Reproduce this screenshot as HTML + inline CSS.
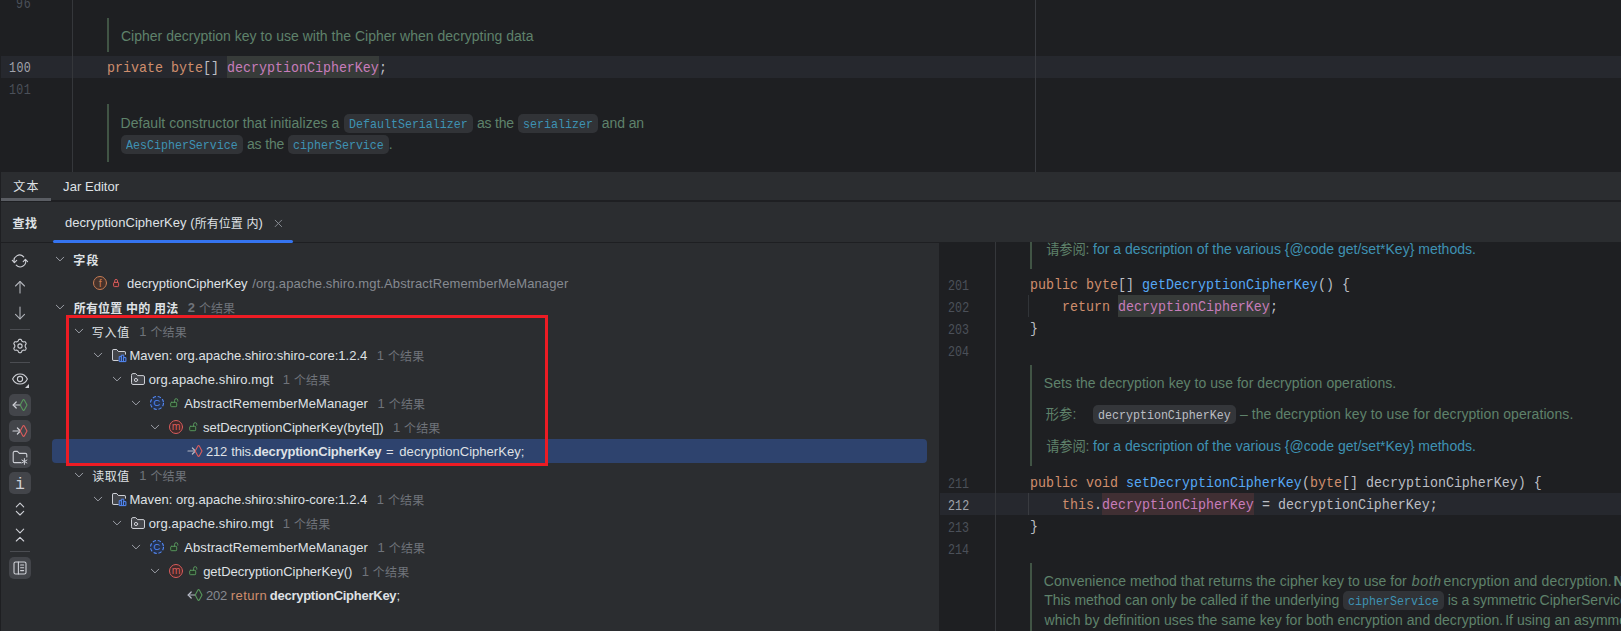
<!DOCTYPE html>
<html lang="zh-CN">
<head>
<meta charset="utf-8">
<title>decryptionCipherKey - Find Usages</title>
<style>
html,body{margin:0;padding:0;background:#1E1F22;}
body{width:1621px;height:631px;overflow:hidden;position:relative;font-family:"Liberation Sans","Noto Sans CJK SC",sans-serif;}
.a{position:absolute;}
.r{position:absolute;white-space:pre;}
.u{font:400 13px/20px "Liberation Sans","Noto Sans CJK SC",sans-serif}
.ub{font:700 13px/20px "Liberation Sans","Noto Sans CJK SC",sans-serif}
.d{font:400 14px/20px "Liberation Sans","Noto Sans CJK SC",sans-serif}
.di{font:italic 400 14px/20px "Liberation Sans","Noto Sans CJK SC",sans-serif}
.db{font:700 14px/20px "Liberation Sans","Noto Sans CJK SC",sans-serif}
.m{font:400 14.8px/20px "Liberation Mono","Noto Sans CJK SC",monospace;transform:scaleX(0.9);transform-origin:0 0}
.s{font:400 12.95px/20px "Liberation Mono","Noto Sans CJK SC",monospace;transform:scaleX(0.9);transform-origin:0 0}
.n{font:400 14.4px/20px "Liberation Mono","Noto Sans CJK SC",monospace;transform:scaleX(0.81);transform-origin:0 0}
.cu{font-size:12px;position:relative;top:0.7px}
.cd{font-size:13.33px}

.cb{position:absolute;background:#313337;border-radius:5px;}
.ic{position:absolute;overflow:visible;}
.tb{position:absolute;left:9px;width:22px;height:22px;border-radius:5px;background:#43454A;}
</style>
</head>
<body>
<!-- ================= top editor ================= -->
<div class="a" id="editor-top" style="left:0;top:0;width:1621px;height:172px;background:#1E1F22;overflow:hidden">
  <div class="a" style="left:1px;top:56px;width:1620px;height:22px;background:#26282E"></div>
  <div class="a" style="left:72px;top:0;width:1px;height:172px;background:#35373B"></div>
  <div class="a" style="left:1035px;top:0;width:1px;height:172px;background:#393B40"></div>
  <div class="a" style="left:107px;top:18px;width:2px;height:34px;background:#415445"></div>
  <div class="a" style="left:107px;top:104px;width:2px;height:58px;background:#415445"></div>
  <div class="a" style="left:227px;top:56px;width:152px;height:22px;background:#373B39"></div>
  <div class="cb" style="left:343.8px;top:114px;width:129px;height:19px"></div>
  <div class="cb" style="left:518.4px;top:114px;width:80px;height:19px"></div>
  <div class="cb" style="left:121.2px;top:135px;width:122px;height:19px"></div>
  <div class="cb" style="left:288.2px;top:135px;width:101px;height:19px"></div>
<span class="r n" style="left:15.80px;top:-6.00px;color:#4B5059;letter-spacing:0.951px">96</span>
<span class="r n" style="left:8.66px;top:58.40px;color:#A1A3AB;letter-spacing:0.540px">100</span>
<span class="r n" style="left:8.66px;top:80.40px;color:#4B5059;letter-spacing:0.446px">101</span>
<span class="r d" style="left:120.99px;top:26.00px;color:#5F826B;letter-spacing:0.012px">Cipher decryption key to use with the Cipher when decrypting data</span>
<span class="r m" style="left:107.00px;top:58.00px;color:#CF8E6D">private </span>
<span class="r m" style="left:171.00px;top:58.00px;color:#CF8E6D">byte</span>
<span class="r m" style="left:203.00px;top:58.00px;color:#BCBEC4">[] </span>
<span class="r m" style="left:227.00px;top:58.00px;color:#C77DBB">decryptionCipherKey</span>
<span class="r m" style="left:379.00px;top:58.00px;color:#BCBEC4">;</span>
<span class="r d" style="left:120.55px;top:113.00px;color:#5F826B;letter-spacing:0.044px">Default constructor that initializes a</span>
<span class="r s" style="left:348.80px;top:115.00px;color:#3E92B3">DefaultSerializer</span>
<span class="r d" style="left:476.91px;top:113.00px;color:#5F826B;letter-spacing:-0.184px">as the</span>
<span class="r s" style="left:523.40px;top:115.00px;color:#3E92B3">serializer</span>
<span class="r d" style="left:601.81px;top:113.00px;color:#5F826B;letter-spacing:-0.103px">and an</span>
<span class="r s" style="left:126.20px;top:136.00px;color:#3E92B3">AesCipherService</span>
<span class="r d" style="left:246.91px;top:134.00px;color:#5F826B;letter-spacing:-0.134px">as the</span>
<span class="r s" style="left:293.25px;top:136.00px;color:#3E92B3">cipherService</span>
<span class="r d" style="left:388.72px;top:134.00px;color:#5F826B;letter-spacing:0.030px">.</span>
<span class="r m" style="left:107.00px;top:168.70px;color:#CF8E6D">public </span>
<span class="r m" style="left:163.00px;top:168.70px;color:#56A8F5">AbstractRememberMeManager</span>
<span class="r m" style="left:363.00px;top:168.70px;color:#BCBEC4">() {</span>
</div>

<!-- ================= editor bottom tabs ================= -->
<div class="a" id="editor-tabs" style="left:1px;top:172px;width:1620px;height:28px;background:#2B2D30"></div>
<div class="a" style="left:1px;top:200px;width:1620px;height:2px;background:#1E1F22"></div>
<div class="a" style="left:1px;top:198px;width:50px;height:3px;background:#5A5D63"></div>

<!-- ================= find tool window header ================= -->
<div class="a" id="find-header" style="left:1px;top:202px;width:1620px;height:40px;background:#2B2D30"></div>
<div class="a" style="left:1px;top:242px;width:938px;height:1px;background:#1E1F22"></div>
<div class="a" style="left:53px;top:240px;width:240px;height:3px;border-radius:1.5px;background:#3574F0"></div>

<!-- ================= usages tree panel ================= -->
<div class="a" id="tree" style="left:1px;top:243px;width:938px;height:388px;background:#2B2D30"></div>
<div class="a" style="left:52px;top:439px;width:875px;height:24px;border-radius:4px;background:#2E436E"></div>
<!-- toolbar toggled buttons -->
<div class="tb" style="top:394px"></div>
<div class="tb" style="top:420px"></div>
<div class="tb" style="top:446px"></div>
<div class="tb" style="top:472px"></div>
<div class="tb" style="top:557px"></div>
<div class="a" style="left:10px;top:329px;width:20px;height:1px;background:#4B4D52"></div>
<div class="a" style="left:10px;top:362px;width:20px;height:1px;background:#4B4D52"></div>
<div class="a" style="left:10px;top:551px;width:20px;height:1px;background:#4B4D52"></div>
<svg class="ic" style="left:12.0px;top:253.0px" width="16" height="16" viewBox="0 0 16 16" fill="none" stroke-linecap="round" stroke-linejoin="round"><g stroke="#CED0D6" stroke-width="1.1"><path d="M11.7 3.9A5.5 5.5 0 0 0 2.45 9.5"/><path d="M0.3 7.3L2.45 9.6L4.7 7.3"/><path d="M4.2 12.1A5.5 5.5 0 0 0 13.4 6.5"/><path d="M11.2 8.6L13.4 6.3L15.6 8.6"/></g></svg>
<svg class="ic" style="left:12.0px;top:279.0px" width="16" height="16" viewBox="0 0 16 16" fill="none" stroke-linecap="round" stroke-linejoin="round"><g stroke="#B0B3B9" stroke-width="1.1"><path d="M8 2.5V14"/><path d="M3.5 7L8 2.5L12.5 7"/></g></svg>
<svg class="ic" style="left:12.0px;top:305.0px" width="16" height="16" viewBox="0 0 16 16" fill="none" stroke-linecap="round" stroke-linejoin="round"><g stroke="#B0B3B9" stroke-width="1.1"><path d="M8 2V13.8"/><path d="M3.5 9.3L8 13.8L12.5 9.3"/></g></svg>
<svg class="ic" style="left:12.0px;top:338.0px" width="16" height="16" viewBox="0 0 16 16" fill="none" stroke-linecap="round" stroke-linejoin="round"><g stroke="#CED0D6" stroke-width="1.1"><path d="M8.00 1.30L8.58 1.33L9.14 1.55L9.54 2.25L9.83 2.97L10.20 3.29L10.60 3.50L10.98 3.74L11.44 3.90L12.21 3.79L13.02 3.79L13.49 4.16L13.80 4.65L14.07 5.17L14.15 5.76L13.75 6.46L13.27 7.07L13.18 7.55L13.20 8.00L13.18 8.45L13.27 8.93L13.75 9.54L14.15 10.24L14.07 10.83L13.80 11.35L13.49 11.84L13.02 12.21L12.21 12.21L11.44 12.10L10.98 12.26L10.60 12.50L10.20 12.71L9.83 13.03L9.54 13.75L9.14 14.45L8.58 14.67L8.00 14.70L7.42 14.67L6.86 14.45L6.46 13.75L6.17 13.03L5.80 12.71L5.40 12.50L5.02 12.26L4.56 12.10L3.79 12.21L2.98 12.21L2.51 11.84L2.20 11.35L1.93 10.83L1.85 10.24L2.25 9.54L2.73 8.93L2.82 8.45L2.80 8.00L2.82 7.55L2.73 7.07L2.25 6.46L1.85 5.76L1.93 5.17L2.20 4.65L2.51 4.16L2.98 3.79L3.79 3.79L4.56 3.90L5.02 3.74L5.40 3.50L5.80 3.29L6.17 2.97L6.46 2.25L6.86 1.55L7.42 1.33L8.00 1.30Z"/><circle cx="8" cy="8" r="2.1"/></g></svg>
<svg class="ic" style="left:12.0px;top:371.0px" width="18" height="18" viewBox="0 0 18 18" fill="none" stroke-linecap="round" stroke-linejoin="round"><g stroke="#CED0D6" stroke-width="1.1"><path d="M0.6 8C2.2 4.6 5 3 8 3S13.8 4.6 15.4 8C13.8 11.4 11 13 8 13S2.2 11.4 0.6 8Z"/><circle cx="8" cy="8" r="2.6"/></g><path d="M17 13V17H13Z" fill="#CED0D6" stroke="none"/></svg>
<svg class="ic" style="left:12.0px;top:397.0px" width="16" height="16" viewBox="0 0 16 16" fill="none" stroke-linecap="round" stroke-linejoin="round"><g stroke="#CED0D6" stroke-width="1.2"><path d="M8.6 8H1.2"/><path d="M4.2 5L1.2 8L4.2 11"/></g><path d="M8.2 8L10.9 3.1Q11.6 2 12.3 3.1L15 8L12.3 12.9Q11.6 14 10.9 12.9Z" stroke="#57965C" stroke-width="1.1"/></svg>
<svg class="ic" style="left:12.0px;top:423.0px" width="16" height="16" viewBox="0 0 16 16" fill="none" stroke-linecap="round" stroke-linejoin="round"><g stroke="#CED0D6" stroke-width="1.2"><path d="M1 8H8.4"/><path d="M5.4 5L8.4 8L5.4 11"/></g><path d="M8.2 8L10.9 3.1Q11.6 2 12.3 3.1L15 8L12.3 12.9Q11.6 14 10.9 12.9Z" stroke="#DB5C5C" stroke-width="1.1"/></svg>
<svg class="ic" style="left:12.0px;top:449.0px" width="16" height="16" viewBox="0 0 16 16" fill="none" stroke-linecap="round" stroke-linejoin="round"><g stroke="#CED0D6" stroke-width="1.1"><path d="M9 13.6H2.6A1.4 1.4 0 0 1 1.2 12.2V3.8A1.4 1.4 0 0 1 2.6 2.4H5.4L7.4 4.4H13.4A1.4 1.4 0 0 1 14.8 5.8V8"/><path d="M12.4 9.6V15.4M9.9 11.05L14.9 13.95M14.9 11.05L9.9 13.95" stroke-width="1"/></g></svg>
<span class="r" style="left:14.9px;top:474.8px;font:400 16.5px/20px 'Liberation Mono',monospace;color:#CED0D6">i</span>
<svg class="ic" style="left:12.0px;top:501.0px" width="16" height="16" viewBox="0 0 16 16" fill="none" stroke-linecap="round" stroke-linejoin="round"><g stroke="#CED0D6" stroke-width="1.1"><path d="M4.3 5.9L8 2.2L11.7 5.9"/><path d="M4.3 10.3L8 14L11.7 10.3"/></g></svg>
<svg class="ic" style="left:12.0px;top:527.0px" width="16" height="16" viewBox="0 0 16 16" fill="none" stroke-linecap="round" stroke-linejoin="round"><g stroke="#CED0D6" stroke-width="1.1"><path d="M4.3 2.2L8 5.9L11.7 2.2"/><path d="M4.3 14L8 10.3L11.7 14"/></g></svg>
<svg class="ic" style="left:12.0px;top:560.0px" width="16" height="16" viewBox="0 0 16 16" fill="none" stroke-linecap="round" stroke-linejoin="round"><g stroke="#CED0D6" stroke-width="1.1"><rect x="2" y="2" width="12" height="12" rx="1.6"/><path d="M6.4 2V14"/><path d="M8.6 5H11.6M8.6 7.8H11.6M8.6 10.6H11.6"/></g></svg>
<svg class="ic" style="left:274.0px;top:219.0px" width="9" height="9" viewBox="0 0 9 9" fill="none" stroke-linecap="round" stroke-linejoin="round"><path d="M1.2 1.2L7.6 7.6M7.6 1.2L1.2 7.6" stroke="#868A91" stroke-width="1"/></svg>
<svg class="ic" style="left:54.1px;top:252.9px" width="12" height="12" viewBox="0 0 12 12" fill="none" stroke-linecap="round" stroke-linejoin="round"><path d="M2.3 4.2L6 7.9L9.7 4.2" stroke="#9DA0A8" stroke-width="1"/></svg>
<svg class="ic" style="left:54.1px;top:300.9px" width="12" height="12" viewBox="0 0 12 12" fill="none" stroke-linecap="round" stroke-linejoin="round"><path d="M2.3 4.2L6 7.9L9.7 4.2" stroke="#9DA0A8" stroke-width="1"/></svg>
<svg class="ic" style="left:73.1px;top:324.9px" width="12" height="12" viewBox="0 0 12 12" fill="none" stroke-linecap="round" stroke-linejoin="round"><path d="M2.3 4.2L6 7.9L9.7 4.2" stroke="#9DA0A8" stroke-width="1"/></svg>
<svg class="ic" style="left:92.1px;top:348.9px" width="12" height="12" viewBox="0 0 12 12" fill="none" stroke-linecap="round" stroke-linejoin="round"><path d="M2.3 4.2L6 7.9L9.7 4.2" stroke="#9DA0A8" stroke-width="1"/></svg>
<svg class="ic" style="left:111.1px;top:372.9px" width="12" height="12" viewBox="0 0 12 12" fill="none" stroke-linecap="round" stroke-linejoin="round"><path d="M2.3 4.2L6 7.9L9.7 4.2" stroke="#9DA0A8" stroke-width="1"/></svg>
<svg class="ic" style="left:130.1px;top:396.9px" width="12" height="12" viewBox="0 0 12 12" fill="none" stroke-linecap="round" stroke-linejoin="round"><path d="M2.3 4.2L6 7.9L9.7 4.2" stroke="#9DA0A8" stroke-width="1"/></svg>
<svg class="ic" style="left:149.1px;top:420.9px" width="12" height="12" viewBox="0 0 12 12" fill="none" stroke-linecap="round" stroke-linejoin="round"><path d="M2.3 4.2L6 7.9L9.7 4.2" stroke="#9DA0A8" stroke-width="1"/></svg>
<svg class="ic" style="left:73.1px;top:468.9px" width="12" height="12" viewBox="0 0 12 12" fill="none" stroke-linecap="round" stroke-linejoin="round"><path d="M2.3 4.2L6 7.9L9.7 4.2" stroke="#9DA0A8" stroke-width="1"/></svg>
<svg class="ic" style="left:92.1px;top:492.9px" width="12" height="12" viewBox="0 0 12 12" fill="none" stroke-linecap="round" stroke-linejoin="round"><path d="M2.3 4.2L6 7.9L9.7 4.2" stroke="#9DA0A8" stroke-width="1"/></svg>
<svg class="ic" style="left:111.1px;top:516.9px" width="12" height="12" viewBox="0 0 12 12" fill="none" stroke-linecap="round" stroke-linejoin="round"><path d="M2.3 4.2L6 7.9L9.7 4.2" stroke="#9DA0A8" stroke-width="1"/></svg>
<svg class="ic" style="left:130.1px;top:540.9px" width="12" height="12" viewBox="0 0 12 12" fill="none" stroke-linecap="round" stroke-linejoin="round"><path d="M2.3 4.2L6 7.9L9.7 4.2" stroke="#9DA0A8" stroke-width="1"/></svg>
<svg class="ic" style="left:149.1px;top:564.9px" width="12" height="12" viewBox="0 0 12 12" fill="none" stroke-linecap="round" stroke-linejoin="round"><path d="M2.3 4.2L6 7.9L9.7 4.2" stroke="#9DA0A8" stroke-width="1"/></svg>
<svg class="ic" style="left:92.0px;top:275.0px" width="16" height="16" viewBox="0 0 16 16" fill="none" stroke-linecap="round" stroke-linejoin="round"><circle cx="8" cy="8" r="6.5" fill="#45322B" stroke="#C77D55"/><text x="8.1" y="11.5" text-anchor="middle" font-family="Liberation Sans,sans-serif" font-size="10.5" fill="#C77D55" stroke="none">f</text></svg>
<svg class="ic" style="left:112.0px;top:278.4px" width="8" height="10" viewBox="0 0 8 10" fill="none" stroke-linecap="round" stroke-linejoin="round"><g stroke="#DB5C5C"><rect x="1.6" y="4.4" width="5" height="4.2" rx="0.8" fill="#402929"/><path d="M2.7 4.4V2.8A1.4 1.4 0 0 1 5.5 2.8V4.4"/></g></svg>
<svg class="ic" style="left:111.0px;top:347.0px" width="16" height="16" viewBox="0 0 16 16" fill="none" stroke-linecap="round" stroke-linejoin="round"><path d="M7 13.5H2.8A1.3 1.3 0 0 1 1.5 12.2V3.8A1.3 1.3 0 0 1 2.8 2.5H5.6L7.4 4.5H13.2A1.3 1.3 0 0 1 14.5 5.8V7" stroke="#CED0D6" fill="#43454A"/><path d="M1.5 4V12.2A1.3 1.3 0 0 0 2.8 13.5H7V7H14.5V5.8A1.3 1.3 0 0 0 13.2 4.5H7.4L5.6 2.5H2.8A1.3 1.3 0 0 0 1.5 3.8Z" fill="#43454A" stroke="none"/><path d="M7 13.5H2.8A1.3 1.3 0 0 1 1.5 12.2V3.8A1.3 1.3 0 0 1 2.8 2.5H5.6L7.4 4.5H13.2A1.3 1.3 0 0 1 14.5 5.8V7" stroke="#CED0D6"/><g stroke="#548AF7" fill="#25324D"><rect x="8.6" y="9.6" width="2.1" height="5"/><rect x="10.7" y="8.2" width="2.1" height="6.4"/><rect x="12.8" y="10.6" width="2.1" height="4"/></g></svg>
<svg class="ic" style="left:130.0px;top:371.0px" width="16" height="16" viewBox="0 0 16 16" fill="none" stroke-linecap="round" stroke-linejoin="round"><g stroke="#CED0D6"><path d="M1.5 4A1.4 1.4 0 0 1 2.9 2.6H5.7L7.6 4.6H13.1A1.4 1.4 0 0 1 14.5 6V12.1A1.4 1.4 0 0 1 13.1 13.5H2.9A1.4 1.4 0 0 1 1.5 12.1Z" fill="#43454A"/><circle cx="6" cy="9" r="1.6"/></g></svg>
<svg class="ic" style="left:149.0px;top:395.0px" width="16" height="16" viewBox="0 0 16 16" fill="none" stroke-linecap="round" stroke-linejoin="round"><circle cx="8" cy="8" r="6.5" fill="#25324D" stroke="#548AF7" stroke-width="1.1" stroke-dasharray="3.3 1.8" stroke-linecap="butt"/><text x="8" y="11.4" text-anchor="middle" font-family="Liberation Sans,sans-serif" font-size="9.5" fill="#548AF7" stroke="none">C</text></svg>
<svg class="ic" style="left:169.6px;top:398.4px" width="10" height="10" viewBox="0 0 10 10" fill="none" stroke-linecap="round" stroke-linejoin="round"><g stroke="#57965C"><rect x="0.7" y="4.3" width="6" height="4.4" rx="0.8" fill="#253627"/><path d="M4.6 4.3V2.3A1.6 1.6 0 0 1 7.8 2.3V3.2"/></g></svg>
<svg class="ic" style="left:168.0px;top:419.0px" width="16" height="16" viewBox="0 0 16 16" fill="none" stroke-linecap="round" stroke-linejoin="round"><circle cx="8" cy="8" r="6.5" fill="#402929" stroke="#DB5C5C"/><text x="8" y="10.600000000000001" text-anchor="middle" font-family="Liberation Sans,sans-serif" font-size="10.5" fill="#DB5C5C" stroke="none">m</text></svg>
<svg class="ic" style="left:188.6px;top:422.4px" width="10" height="10" viewBox="0 0 10 10" fill="none" stroke-linecap="round" stroke-linejoin="round"><g stroke="#57965C"><rect x="0.7" y="4.3" width="6" height="4.4" rx="0.8" fill="#253627"/><path d="M4.6 4.3V2.3A1.6 1.6 0 0 1 7.8 2.3V3.2"/></g></svg>
<svg class="ic" style="left:111.0px;top:491.0px" width="16" height="16" viewBox="0 0 16 16" fill="none" stroke-linecap="round" stroke-linejoin="round"><path d="M7 13.5H2.8A1.3 1.3 0 0 1 1.5 12.2V3.8A1.3 1.3 0 0 1 2.8 2.5H5.6L7.4 4.5H13.2A1.3 1.3 0 0 1 14.5 5.8V7" stroke="#CED0D6" fill="#43454A"/><path d="M1.5 4V12.2A1.3 1.3 0 0 0 2.8 13.5H7V7H14.5V5.8A1.3 1.3 0 0 0 13.2 4.5H7.4L5.6 2.5H2.8A1.3 1.3 0 0 0 1.5 3.8Z" fill="#43454A" stroke="none"/><path d="M7 13.5H2.8A1.3 1.3 0 0 1 1.5 12.2V3.8A1.3 1.3 0 0 1 2.8 2.5H5.6L7.4 4.5H13.2A1.3 1.3 0 0 1 14.5 5.8V7" stroke="#CED0D6"/><g stroke="#548AF7" fill="#25324D"><rect x="8.6" y="9.6" width="2.1" height="5"/><rect x="10.7" y="8.2" width="2.1" height="6.4"/><rect x="12.8" y="10.6" width="2.1" height="4"/></g></svg>
<svg class="ic" style="left:130.0px;top:515.0px" width="16" height="16" viewBox="0 0 16 16" fill="none" stroke-linecap="round" stroke-linejoin="round"><g stroke="#CED0D6"><path d="M1.5 4A1.4 1.4 0 0 1 2.9 2.6H5.7L7.6 4.6H13.1A1.4 1.4 0 0 1 14.5 6V12.1A1.4 1.4 0 0 1 13.1 13.5H2.9A1.4 1.4 0 0 1 1.5 12.1Z" fill="#43454A"/><circle cx="6" cy="9" r="1.6"/></g></svg>
<svg class="ic" style="left:149.0px;top:539.0px" width="16" height="16" viewBox="0 0 16 16" fill="none" stroke-linecap="round" stroke-linejoin="round"><circle cx="8" cy="8" r="6.5" fill="#25324D" stroke="#548AF7" stroke-width="1.1" stroke-dasharray="3.3 1.8" stroke-linecap="butt"/><text x="8" y="11.4" text-anchor="middle" font-family="Liberation Sans,sans-serif" font-size="9.5" fill="#548AF7" stroke="none">C</text></svg>
<svg class="ic" style="left:169.6px;top:542.4px" width="10" height="10" viewBox="0 0 10 10" fill="none" stroke-linecap="round" stroke-linejoin="round"><g stroke="#57965C"><rect x="0.7" y="4.3" width="6" height="4.4" rx="0.8" fill="#253627"/><path d="M4.6 4.3V2.3A1.6 1.6 0 0 1 7.8 2.3V3.2"/></g></svg>
<svg class="ic" style="left:168.0px;top:563.0px" width="16" height="16" viewBox="0 0 16 16" fill="none" stroke-linecap="round" stroke-linejoin="round"><circle cx="8" cy="8" r="6.5" fill="#402929" stroke="#DB5C5C"/><text x="8" y="10.600000000000001" text-anchor="middle" font-family="Liberation Sans,sans-serif" font-size="10.5" fill="#DB5C5C" stroke="none">m</text></svg>
<svg class="ic" style="left:188.6px;top:566.4px" width="10" height="10" viewBox="0 0 10 10" fill="none" stroke-linecap="round" stroke-linejoin="round"><g stroke="#57965C"><rect x="0.7" y="4.3" width="6" height="4.4" rx="0.8" fill="#253627"/><path d="M4.6 4.3V2.3A1.6 1.6 0 0 1 7.8 2.3V3.2"/></g></svg>
<svg class="ic" style="left:187.0px;top:443.2px" width="16" height="16" viewBox="0 0 16 16" fill="none" stroke-linecap="round" stroke-linejoin="round"><g stroke="#B4B8C4" stroke-width="1.2"><path d="M1 8H8.4"/><path d="M5.4 5L8.4 8L5.4 11"/></g><path d="M8.2 8L10.9 3.1Q11.6 2 12.3 3.1L15 8L12.3 12.9Q11.6 14 10.9 12.9Z" stroke="#DB5C5C" stroke-width="1.1"/></svg>
<svg class="ic" style="left:187.0px;top:587.2px" width="16" height="16" viewBox="0 0 16 16" fill="none" stroke-linecap="round" stroke-linejoin="round"><g stroke="#B4B8C4" stroke-width="1.2"><path d="M8.6 8H1.2"/><path d="M4.2 5L1.2 8L4.2 11"/></g><path d="M8.2 8L10.9 3.1Q11.6 2 12.3 3.1L15 8L12.3 12.9Q11.6 14 10.9 12.9Z" stroke="#57965C" stroke-width="1.1"/></svg>

<!-- ================= preview editor (right) ================= -->
<div class="a" id="preview" style="left:939px;top:242px;width:682px;height:389px;background:#1E1F22;overflow:hidden"></div>
<div class="a" style="left:940px;top:493px;width:681px;height:22px;background:#26282E"></div>
<div class="a" style="left:995px;top:242px;width:1px;height:389px;background:#35373B"></div>
<div class="a" style="left:1030px;top:242px;width:2px;height:27px;background:#415445"></div>
<div class="a" style="left:1030px;top:365px;width:2px;height:101px;background:#415445"></div>
<div class="a" style="left:1030px;top:563px;width:2px;height:68px;background:#415445"></div>
<div class="a" style="left:1028px;top:295px;width:1px;height:22px;background:#313438"></div>
<div class="a" style="left:1028px;top:493px;width:1px;height:22px;background:#393B40"></div>
<div class="a" style="left:1118px;top:295px;width:152px;height:22px;background:#373B39"></div>
<div class="a" style="left:1102px;top:493px;width:152px;height:22px;background:#402F33"></div>
<div class="cb" style="left:1092.9px;top:405px;width:143px;height:19px;background:#34363A"></div>
<div class="cb" style="left:1343.2px;top:591px;width:101px;height:19px"></div>

<span class="r u" style="left:13.37px;top:176.50px;color:#DFE1E5;letter-spacing:1.252px"><span class="cu">文本</span></span>
<span class="r u" style="left:63.10px;top:176.50px;color:#DFE1E5;letter-spacing:0.043px">Jar Editor</span>
<span class="r ub" style="left:12.61px;top:213.30px;color:#DFE1E5;letter-spacing:0.376px"><span class="cu">查找</span></span>
<span class="r u" style="left:64.95px;top:213.30px;color:#DFE1E5;letter-spacing:0.052px">decryptionCipherKey (<span class="cu">所有位置</span> <span class="cu">内</span>)</span>
<span class="r ub" style="left:73.24px;top:250.30px;color:#DFE1E5;letter-spacing:1.268px"><span class="cu">字段</span></span>
<span class="r u" style="left:126.95px;top:274.30px;color:#DFE1E5">decryptionCipherKey</span>
<span class="r u" style="left:252.20px;top:274.30px;color:#868A91;letter-spacing:0.116px">/org.apache.shiro.mgt.AbstractRememberMeManager</span>
<span class="r ub" style="left:73.81px;top:298.30px;color:#DFE1E5;letter-spacing:0.125px"><span class="cu">所有位置</span> <span class="cu">中的</span> <span class="cu">用法</span></span>
<span class="r ub" style="left:187.85px;top:298.30px;color:#6F737A;letter-spacing:-0.234px">2</span>
<span class="r u" style="left:198.88px;top:298.30px;color:#6F737A;letter-spacing:0.120px"><span class="cu">个结果</span></span>
<span class="r u" style="left:91.86px;top:322.30px;color:#DFE1E5;letter-spacing:0.720px"><span class="cu">写入值</span></span>
<span class="r u" style="left:139.31px;top:322.30px;color:#6F737A;letter-spacing:0.142px">1 <span class="cu">个结果</span></span>
<span class="r u" style="left:129.53px;top:346.30px;color:#DFE1E5;letter-spacing:0.021px">Maven: org.apache.shiro:shiro-core:1.2.4</span>
<span class="r u" style="left:376.81px;top:346.30px;color:#6F737A;letter-spacing:0.142px">1 <span class="cu">个结果</span></span>
<span class="r u" style="left:148.65px;top:370.30px;color:#DFE1E5;letter-spacing:0.133px">org.apache.shiro.mgt</span>
<span class="r u" style="left:282.81px;top:370.30px;color:#6F737A;letter-spacing:0.142px">1 <span class="cu">个结果</span></span>
<span class="r u" style="left:184.27px;top:394.30px;color:#DFE1E5;letter-spacing:0.096px">AbstractRememberMeManager</span>
<span class="r u" style="left:377.61px;top:394.30px;color:#6F737A;letter-spacing:0.142px">1 <span class="cu">个结果</span></span>
<span class="r u" style="left:203.04px;top:418.30px;color:#DFE1E5">setDecryptionCipherKey(byte[])</span>
<span class="r u" style="left:392.91px;top:418.30px;color:#6F737A;letter-spacing:0.142px">1 <span class="cu">个结果</span></span>
<span class="r u" style="left:205.95px;top:442.30px;color:#DFE1E5;letter-spacing:-0.191px">212</span>
<span class="r u" style="left:231.30px;top:442.30px;color:#DFE1E5;letter-spacing:-0.165px">this.</span>
<span class="r ub" style="left:253.87px;top:442.30px;color:#DFE1E5;letter-spacing:-0.209px">decryptionCipherKey</span>
<span class="r u" style="left:385.97px;top:442.30px;color:#DFE1E5;letter-spacing:0.055px">=</span>
<span class="r u" style="left:399.35px;top:442.30px;color:#DFE1E5;letter-spacing:0.038px">decryptionCipherKey;</span>
<span class="r u" style="left:92.32px;top:466.30px;color:#DFE1E5;letter-spacing:0.492px"><span class="cu">读取值</span></span>
<span class="r u" style="left:139.31px;top:466.30px;color:#6F737A;letter-spacing:0.142px">1 <span class="cu">个结果</span></span>
<span class="r u" style="left:129.53px;top:490.30px;color:#DFE1E5;letter-spacing:0.021px">Maven: org.apache.shiro:shiro-core:1.2.4</span>
<span class="r u" style="left:376.81px;top:490.30px;color:#6F737A;letter-spacing:0.142px">1 <span class="cu">个结果</span></span>
<span class="r u" style="left:148.65px;top:514.30px;color:#DFE1E5;letter-spacing:0.133px">org.apache.shiro.mgt</span>
<span class="r u" style="left:282.81px;top:514.30px;color:#6F737A;letter-spacing:0.142px">1 <span class="cu">个结果</span></span>
<span class="r u" style="left:184.27px;top:538.30px;color:#DFE1E5;letter-spacing:0.096px">AbstractRememberMeManager</span>
<span class="r u" style="left:377.61px;top:538.30px;color:#6F737A;letter-spacing:0.142px">1 <span class="cu">个结果</span></span>
<span class="r u" style="left:203.15px;top:562.30px;color:#DFE1E5;letter-spacing:-0.014px">getDecryptionCipherKey()</span>
<span class="r u" style="left:361.71px;top:562.30px;color:#6F737A;letter-spacing:0.142px">1 <span class="cu">个结果</span></span>
<span class="r u" style="left:205.95px;top:586.30px;color:#868A91;letter-spacing:-0.191px">202</span>
<span class="r u" style="left:230.84px;top:586.30px;color:#CF8E6D;letter-spacing:0.390px">return</span>
<span class="r ub" style="left:269.77px;top:586.30px;color:#DFE1E5;letter-spacing:-0.259px">decryptionCipherKey</span>
<span class="r u" style="left:396.43px;top:586.30px;color:#DFE1E5;letter-spacing:0.055px">;</span>
<span class="r n" style="left:948.18px;top:275.80px;color:#4B5059;letter-spacing:-0.062px">201</span>
<span class="r n" style="left:948.18px;top:297.80px;color:#4B5059;letter-spacing:0.099px">202</span>
<span class="r n" style="left:948.18px;top:319.80px;color:#4B5059;letter-spacing:0.047px">203</span>
<span class="r n" style="left:948.18px;top:341.80px;color:#4B5059;letter-spacing:-0.045px">204</span>
<span class="r n" style="left:948.18px;top:473.80px;color:#4B5059;letter-spacing:-0.062px">211</span>
<span class="r n" style="left:948.18px;top:495.80px;color:#A1A3AB;letter-spacing:0.099px">212</span>
<span class="r n" style="left:948.18px;top:517.80px;color:#4B5059;letter-spacing:0.047px">213</span>
<span class="r n" style="left:948.18px;top:539.80px;color:#4B5059;letter-spacing:-0.045px">214</span>
<span class="r d" style="left:1046.14px;top:239.00px;color:#5F826B;letter-spacing:-0.179px"><span class="cd">请参阅</span>:</span>
<span class="r d" style="left:1093.10px;top:239.00px;color:#3E92B3;letter-spacing:0.008px">for a description of the various {@code get/set*Key} methods.</span>
<span class="r m" style="left:1030.00px;top:275.30px;color:#CF8E6D">public </span>
<span class="r m" style="left:1086.00px;top:275.30px;color:#CF8E6D">byte</span>
<span class="r m" style="left:1118.00px;top:275.30px;color:#BCBEC4">[] </span>
<span class="r m" style="left:1142.00px;top:275.30px;color:#56A8F5">getDecryptionCipherKey</span>
<span class="r m" style="left:1318.00px;top:275.30px;color:#BCBEC4">() {</span>
<span class="r m" style="left:1062.00px;top:297.30px;color:#CF8E6D">return </span>
<span class="r m" style="left:1118.00px;top:297.30px;color:#C77DBB">decryptionCipherKey</span>
<span class="r m" style="left:1270.00px;top:297.30px;color:#BCBEC4">;</span>
<span class="r m" style="left:1030.00px;top:319.30px;color:#BCBEC4">}</span>
<span class="r d" style="left:1043.86px;top:373.00px;color:#5F826B;letter-spacing:0.052px">Sets the decryption key to use for decryption operations.</span>
<span class="r d" style="left:1045.81px;top:403.80px;color:#5F826B;letter-spacing:-0.037px"><span class="cd">形参</span>:</span>
<span class="r s" style="left:1097.90px;top:405.80px;color:#BCBEC4">decryptionCipherKey</span>
<span class="r d" style="left:1239.90px;top:403.80px;color:#5F826B;letter-spacing:0.079px">– the decryption key to use for decryption operations.</span>
<span class="r d" style="left:1046.14px;top:436.10px;color:#5F826B;letter-spacing:-0.179px"><span class="cd">请参阅</span>:</span>
<span class="r d" style="left:1093.10px;top:436.10px;color:#3E92B3;letter-spacing:0.008px">for a description of the various {@code get/set*Key} methods.</span>
<span class="r m" style="left:1030.00px;top:473.30px;color:#CF8E6D">public </span>
<span class="r m" style="left:1086.00px;top:473.30px;color:#CF8E6D">void </span>
<span class="r m" style="left:1126.00px;top:473.30px;color:#56A8F5">setDecryptionCipherKey</span>
<span class="r m" style="left:1302.00px;top:473.30px;color:#BCBEC4">(</span>
<span class="r m" style="left:1310.00px;top:473.30px;color:#CF8E6D">byte</span>
<span class="r m" style="left:1342.00px;top:473.30px;color:#BCBEC4">[] decryptionCipherKey) {</span>
<span class="r m" style="left:1062.00px;top:495.30px;color:#CF8E6D">this</span>
<span class="r m" style="left:1094.00px;top:495.30px;color:#BCBEC4">.</span>
<span class="r m" style="left:1102.00px;top:495.30px;color:#C77DBB">decryptionCipherKey</span>
<span class="r m" style="left:1254.00px;top:495.30px;color:#BCBEC4"> = decryptionCipherKey;</span>
<span class="r m" style="left:1030.00px;top:517.30px;color:#BCBEC4">}</span>
<span class="r d" style="left:1043.79px;top:570.80px;color:#5F826B;letter-spacing:0.047px">Convenience method that returns the cipher key to use for</span>
<span class="r di" style="left:1411.80px;top:570.80px;color:#5F826B;letter-spacing:0.698px">both</span>
<span class="r d" style="left:1443.61px;top:570.80px;color:#5F826B;letter-spacing:0.150px">encryption and decryption.</span>
<span class="r db" style="left:1613.56px;top:570.80px;color:#5F826B;letter-spacing:0.030px">N.B.</span>
<span class="r d" style="left:1044.19px;top:589.80px;color:#5F826B;letter-spacing:-0.015px">This method can only be called if the underlying</span>
<span class="r s" style="left:1348.20px;top:591.80px;color:#3E92B3">cipherService</span>
<span class="r d" style="left:1447.76px;top:589.80px;color:#5F826B;letter-spacing:-0.065px">is a symmetric</span>
<span class="r d" style="left:1539.59px;top:589.80px;color:#5F826B;letter-spacing:0.030px">CipherService</span>
<span class="r d" style="left:1044.52px;top:609.60px;color:#5F826B;letter-spacing:0.059px">which by definition uses the same key for both encryption and decryption.</span>
<span class="r d" style="left:1505.21px;top:609.60px;color:#5F826B;letter-spacing:0.030px">If using an asymmetric CipherService</span>

<!-- red annotation rectangle -->
<div class="a" style="left:66px;top:315px;width:476px;height:145px;border:3px solid #ED1C24"></div>
</body>
</html>
